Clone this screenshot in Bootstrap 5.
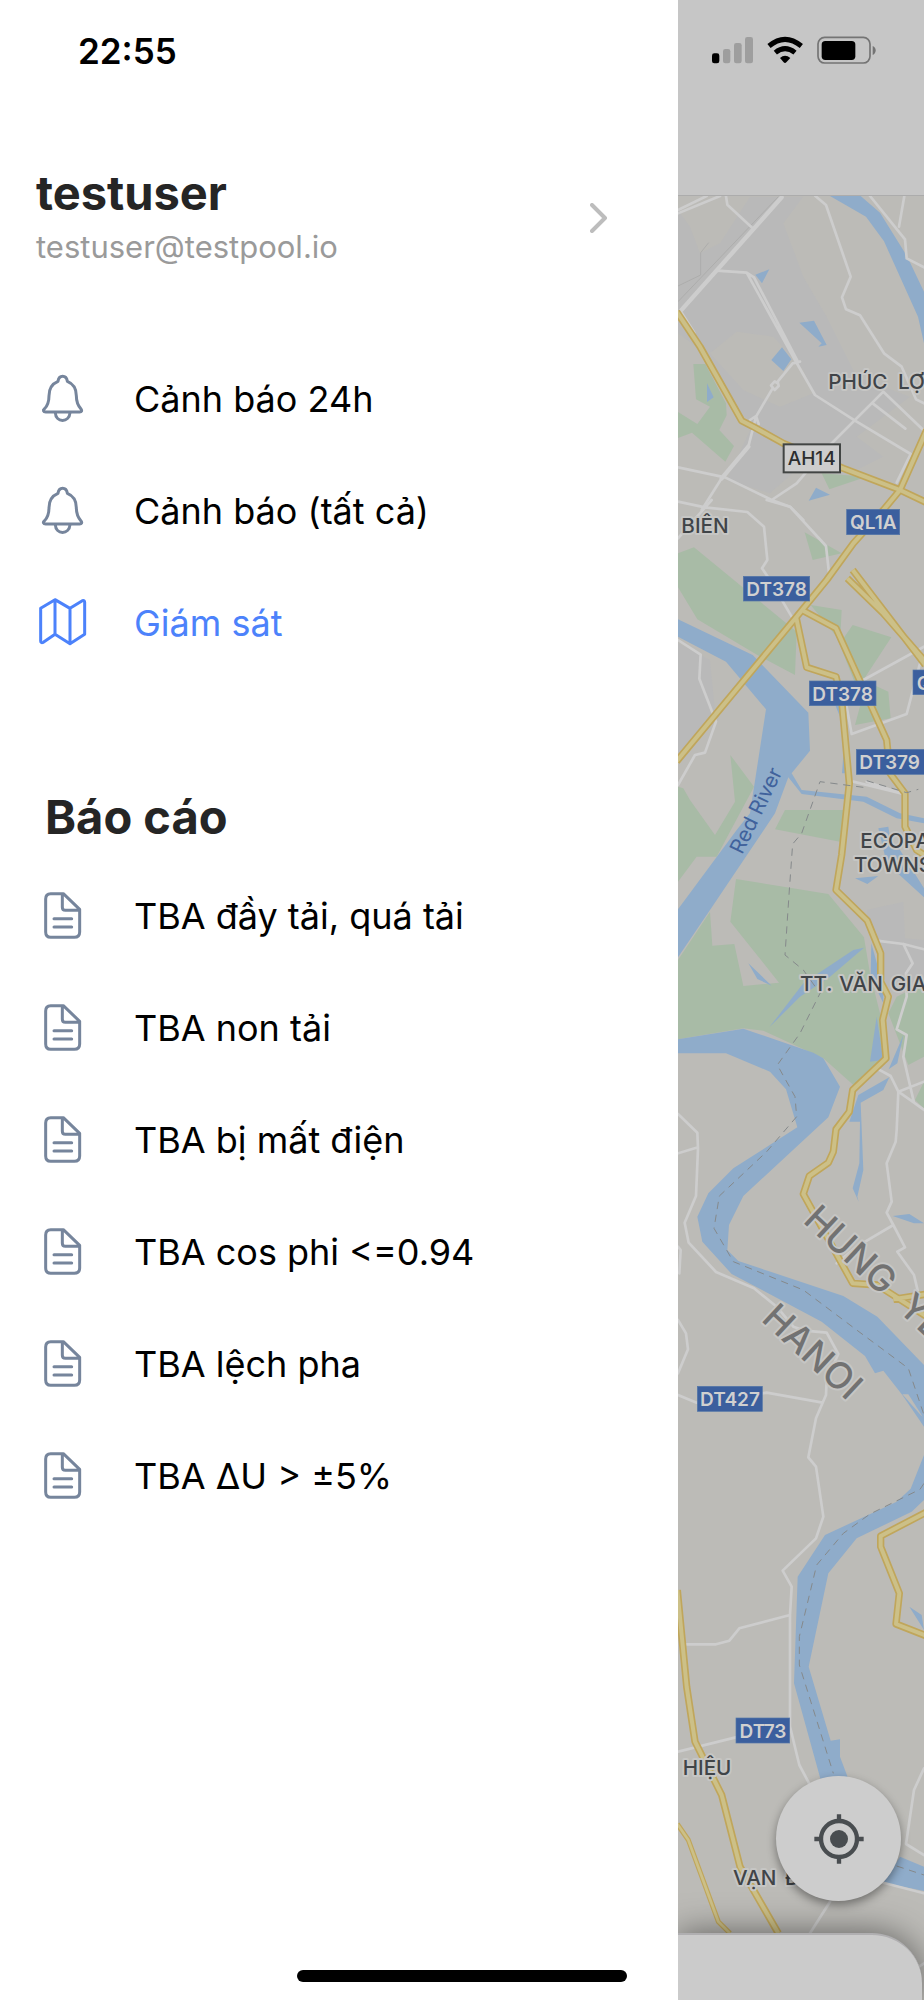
<!DOCTYPE html>
<html lang="vi">
<head>
<meta charset="utf-8">
<meta name="viewport" content="width=device-width, initial-scale=1">
<title>Giám sát</title>
<link href="https://cdn.jsdelivr.net/npm/bootstrap@5.3.0/dist/css/bootstrap.min.css" rel="stylesheet">
<style>
  body { font-family: Inter, "Noto Sans", sans-serif; color: #000; background: #fff; }
  .app-drawer { flex: 0 0 73.4%; }
  .app-clock { font-size: 35px; line-height: 40px; font-weight: 600; padding: 31px 0 0 78px; }
  .app-profile { margin-top: 98px; padding: 0 70px 0 36px; color: #252525; }
  .app-name { font-size: 47px; line-height: 48px; font-weight: 700; }
  .app-mail { font-size: 31px; line-height: 40px; margin-top: 10px; color: #9a9a9a; }
  .app-menu { margin: 0; padding: 0 0 0 38px; }
  .app-menu a { height: 112px; gap: 46px; font-size: 36px; line-height: 48px; color: #000; }
  .app-menu svg { width: 50px; height: 50px; flex: none; color: #76859c; }
  .app-menu a.active, .app-menu a.active svg { color: #4c82fb; }
  .app-first { margin-top: 76px; }
  .app-heading { font-size: 47px; line-height: 56px; font-weight: 700; color: #252525; margin: 110px 0 15px; padding-left: 45px; }
  .app-stroke { fill: none; stroke: currentColor; stroke-width: 9; stroke-linecap: round; stroke-linejoin: round; }
  .app-home { height: 12px; width: 330px; bottom: 18px; background: #000; }
  .map-head { height: 196px; background: #c6c6c6; border-bottom: 1px solid #acacac; padding: 36px 0 0 34px; gap: 14px; }
  .map-view { background: #bcbbb7; min-height: 1804px; }
  .map-svg { inset: 0; width: 100%; height: 100%; }
  .map-locate { width: 125px; height: 125px; right: 23px; bottom: 99px; background: #cdcdcd; color: #494d50; box-shadow: 0 4px 10px rgba(0,0,0,.4); }
  .map-sheet { left: 0; right: 2px; bottom: 0; height: 67px; background: #cbcbcb; border-top: 2px solid #b0afb1; border-top-right-radius: 50px; box-shadow: 0 0 34px rgba(0,0,0,.5); }
  .m-gray { fill: #b9b9b9; } .m-base { fill: #bcbbb7; }
  .m-green { fill: #a8bba6; } .m-water { fill: #8facca; }
  .m-rail { fill: none; stroke: #adadac; stroke-width: 3; }
  .m-road { fill: none; stroke: #cdcdcd; stroke-width: 8; stroke-linejoin: round; stroke-linecap: round; }
  .m-wide { stroke-width: 13; }
  .m-case { fill: none; stroke: #c0a65b; stroke-width: 22; stroke-linejoin: round; }
  .m-fill { fill: none; stroke: #ccc088; stroke-width: 12; stroke-linejoin: round; }
  .m-dash { fill: none; stroke: #85898b; stroke-width: 3; stroke-dasharray: 22 17; }
  .m-shield rect { fill: #3b5f9e; stroke: #5577a8; stroke-width: 2; }
  .m-shield text { fill: #d0d0d0; font-size: 57px; font-weight: 600; text-anchor: middle; }
  .m-label text { fill: #404448; font-size: 62px; font-weight: 500; stroke: #c6c6c4; stroke-width: 12; paint-order: stroke; stroke-linejoin: round; }
  .m-label .m-region { fill: #727272; font-size: 110px; }
</style>
</head>
<body>
<svg class="d-none" aria-hidden="true">
  <symbol id="i-bell" viewBox="114 105 150 150"><g class="app-stroke"><path d="M174 127C177 107 199 107 202 127C222 135 229 148 229 170C229 190 236 202 243 210C247 215 245 219 239 219H137C130 219 128 214 133 210C141 202 147 190 147 170C147 148 155 135 174 127Z"/><path d="M166 221C167 252 208 252 210 221"/></g></symbol>
  <symbol id="i-map" viewBox="114 777 150 150"><g class="app-stroke"><path d="M122 808L165 782L210 808L247 785Q254 783 254 790V886L210 914L165 886L130 910Q122 913 122 906ZM165 782V886M210 808V914"/></g></symbol>
  <symbol id="i-doc" viewBox="114 399 150 150"><g class="app-stroke"><path d="M152 407H190L239 454V522Q239 538 223 538H152Q137 538 137 522V423Q137 407 152 407ZM187 407V448Q187 457 196 457H238M162 482H215M162 507H215"/></g></symbol>
</svg>

<div class="d-flex min-vh-100 position-relative overflow-hidden">
  <aside class="app-drawer d-flex flex-column bg-white">
    <div class="app-clock">22:55</div>
    <a href="#profile" class="app-profile d-flex align-items-center justify-content-between text-decoration-none">
      <div>
        <div class="app-name">testuser</div>
        <div class="app-mail">testuser@testpool.io</div>
      </div>
      <svg width="18" height="30" viewBox="0 0 18 30" fill="none" stroke="#bdbdbd" stroke-width="4" stroke-linecap="round" stroke-linejoin="round" aria-hidden="true"><path d="M2 2L15 15L2 28"/></svg>
    </a>
    <nav>
      <ul class="app-menu app-first list-unstyled">
        <li><a href="#a24" class="d-flex align-items-center text-decoration-none"><svg><use href="#i-bell"/></svg><span>Cảnh báo 24h</span></a></li>
        <li><a href="#all" class="d-flex align-items-center text-decoration-none"><svg><use href="#i-bell"/></svg><span>Cảnh báo (tất cả)</span></a></li>
        <li><a href="#map" class="active d-flex align-items-center text-decoration-none"><svg><use href="#i-map"/></svg><span>Giám sát</span></a></li>
      </ul>
      <h2 class="app-heading">Báo cáo</h2>
      <ul class="app-menu list-unstyled">
        <li><a href="#r1" class="d-flex align-items-center text-decoration-none"><svg><use href="#i-doc"/></svg><span>TBA đầy tải, quá tải</span></a></li>
        <li><a href="#r2" class="d-flex align-items-center text-decoration-none"><svg><use href="#i-doc"/></svg><span>TBA non tải</span></a></li>
        <li><a href="#r3" class="d-flex align-items-center text-decoration-none"><svg><use href="#i-doc"/></svg><span>TBA bị mất điện</span></a></li>
        <li><a href="#r4" class="d-flex align-items-center text-decoration-none"><svg><use href="#i-doc"/></svg><span>TBA cos phi &lt;=0.94</span></a></li>
        <li><a href="#r5" class="d-flex align-items-center text-decoration-none"><svg><use href="#i-doc"/></svg><span>TBA lệch pha</span></a></li>
        <li><a href="#r6" class="d-flex align-items-center text-decoration-none"><svg><use href="#i-doc"/></svg><span>TBA ΔU &gt; ±5%</span></a></li>
      </ul>
    </nav>
  </aside>

  <main class="flex-grow-1 d-flex flex-column overflow-hidden">
    <header class="map-head d-flex align-items-start">
      <svg width="41" height="28" viewBox="126 108 123 84" aria-label="Signal"><rect x="126" y="160" width="22" height="30" rx="7"/><g fill="#9e9e9e"><rect x="159" y="147" width="22" height="43" rx="7"/><rect x="192" y="129" width="23" height="61" rx="7"/><rect x="225" y="111" width="24" height="79" rx="7"/></g></svg>
      <svg width="36" height="28" viewBox="291 108 108 84" aria-label="Wi-Fi"><g fill="none" stroke="#000" stroke-width="15"><path d="M297 138Q345 98 394 138"/><path d="M316 158Q345 134 375 158"/></g><path d="M330 174Q345 161 361 174L349 187Q345 191 341 187Z"/></svg>
      <svg width="60" height="28" viewBox="442 108 180 84" aria-label="Battery"><rect x="445" y="112" width="156" height="77" rx="20" fill="none" stroke="#747474" stroke-width="5"/><rect x="456" y="123" width="101" height="57" rx="11"/><path d="M609 138Q618 142 618 151Q618 161 609 165Z" fill="#747474"/></svg>
    </header>

    <section class="map-view flex-grow-1 position-relative overflow-hidden" aria-label="Map">
      <svg class="map-svg position-absolute" viewBox="24 588 738 5412" preserveAspectRatio="xMinYMin slice">
        <!-- built-up areas -->
        <g transform="translate(0 570)">
          <path class="m-gray" d="M24 60L60 110L90 190L150 160L240 20H400L340 100L400 260L470 380L560 560L720 620L560 740L640 800L520 860L390 830L300 910L170 870L250 700L170 640L120 500L24 430Z"/>
          <path class="m-base" d="M120 490L200 425L310 440L400 540L430 610L330 650L220 600Z"/>
        </g>
        <path class="m-gray" transform="translate(0 1500)" d="M24 430L120 480L138 665L24 760Z"/>
        <path class="m-gray" transform="translate(0 2400)" d="M590 330L700 305L705 415L762 420V540L650 560L600 400Z"/>
        <!-- parks -->
        <g class="m-green">
          <path transform="translate(0 570)" d="M70 522H106L168 640L170 676L148 720L192 768L166 815L66 728L24 744V666L82 702L120 650L78 628ZM455 850L590 860L478 898Z"/>
          <path transform="translate(0 1500)" d="M24 160L72 142L380 395L375 525L262 465L82 358L24 262ZM404 97L515 160L428 180ZM422 315L515 330L510 430L548 375L664 412L580 540L655 575L662 655L555 675L575 600L500 410Z"/>
          <path transform="translate(0 2400)" d="M24 -40L40 -35L60 0L135 105L195 5L181 -135L252 -40L140 170H80L24 245ZM345 30H520L510 125L315 88ZM198 237L475 282L582 412L600 520L645 700L650 775L550 855L460 775L280 692L220 685L24 718V480L120 335L127 437L193 432L220 558L327 548L181 365ZM762 550L680 590L655 640L715 795L762 770ZM762 845L735 900L762 925Z"/>
        </g>
        <!-- rivers and lakes -->
        <g class="m-water">
          <path transform="translate(0 570)" d="M480 18H572L630 68L712 200L762 305V460L744 380L642 154L588 80ZM256 254L298 238L276 280ZM388 398L432 392L470 465L445 470L455 460ZM336 472L364 508L340 543L304 510ZM111 580L131 622L111 636ZM438 893L480 914L416 932Z"/>
          <path transform="translate(0 1500)" d="M24 358L248 465L415 638L420 752L355 832L315 940L120 1230L24 1372V1228L200 990L240 940L288 628L168 485L24 410ZM365 820L395 870L590 890L690 940L762 955V970L680 955L580 905L395 882L355 832ZM497 618H516V665ZM516 820L522 740L530 820Z"/>
          <path transform="translate(0 2400)" d="M235 490L305 557L262 537ZM298 682L400 550L550 450L582 443L480 530L390 590ZM604 430L640 560V610L602 530ZM620 650L640 780L600 785ZM700 705L682 790L656 808ZM658 832L640 870L572 908L580 1110L562 1190L566 1205L548 1165L568 1090L570 965H538L565 885ZM555 235L625 228L592 252ZM625 85L655 80L662 125L690 150L762 265V292L650 190Z"/>
          <path transform="translate(0 3300)" d="M24 -182L220 -214L430 -142L460 -125L510 -40L475 52L220 288L177 375L172 450L205 483L520 588L622 650L762 795V980L697 885L640 812L615 820L585 768L455 665L185 522L97 425L82 350L115 280L190 205L382 82L348 -32L300 -85L168 -140H24ZM668 348L718 342L762 370H732Z"/>
          <path transform="translate(0 4200)" d="M762 165L722 266L680 305L465 405L383 530L372 850L455 1150H540L510 1070V1018L482 1022L416 800L475 520L560 415L725 335L762 300ZM718 620L755 645L762 690ZM640 1448L690 1370L762 1400V1473Z"/>
        </g>
        <path class="m-base" transform="translate(0 3300)" d="M697 883H715L758 950L752 945Z"/>
        <path class="m-rail" transform="translate(0 570)" d="M24 335L325 20M24 288L92 255V188L116 158"/>
        <!-- minor roads -->
        <g class="m-road">
          <path transform="translate(0 570)" d="M24 60L110 18M24 70L150 18M168 18L172 44L248 115M140 242L230 248L375 510L435 615L555 692L722 792L680 878M230 248L252 262L382 512M436 18L468 45L542 260L516 322L528 358L570 376L642 490L695 530L738 628L762 640M600 18L705 148L710 205L762 232M703 18L687 110M390 515L368 520L323 575L326 588L314 600L303 586L314 574L323 580M306 598L258 680L235 770L155 865L95 960M240 690L258 678L266 702M24 832L165 862L305 930L360 950L400 990M480 765L640 605L762 722M608 640L706 716M305 930L380 880L410 845"/>
          <path class="m-wide" transform="translate(0 570)" d="M335 22L30 365L70 428M235 770L155 865"/>
          <path transform="translate(0 1500)" d="M24 5L105 22L232 36L282 80L292 180L276 205L300 240L365 350M125 0L24 115M290 0L360 20L468 138L478 228M24 420L92 464L88 536L138 665L105 758L75 765L24 855M580 540L762 440M750 490L710 642L545 702L530 620M550 845L700 882L590 845"/>
          <path transform="translate(0 2400)" d="M620 422L700 432L762 448M700 432L728 490L708 520L710 590L680 688L710 705L700 770L732 908M620 805L662 828L685 875L732 908L762 930M762 845L685 875L680 990L677 1025L650 1090L665 1205L650 1238L670 1275L705 1342L682 1355L732 1425L745 1480M670 1275L560 1340L500 1390"/>
          <path transform="translate(0 3300)" d="M24 42L82 98L84 145L78 288L44 368L56 428L138 516L252 565L320 620L370 680L405 692L470 698L505 762L470 840L468 885L458 908M24 160L84 142M24 440L32 450L28 520M24 660L48 700L54 748L24 820M24 885L80 908L290 878L458 908L438 955L415 1072L438 1100L460 1250L438 1315L338 1412L365 1460L360 1545V1880L388 1995L420 2055M50 1633H138L178 1622L208 1585L360 1545"/>
          <path transform="translate(0 5100)" d="M24 155L197 112M762 205L732 270L708 432L762 465M640 548L762 580M480 605L420 700M750 798L762 790"/>
        </g>
        <!-- main roads: casing, then fill -->
        <defs><g id="majors">
          <path d="M20 935L90 1040L215 1262L250 1280L340 1330L520 1405L690 1470L770 1508M770 1290L690 1470L640 1530L550 1630L470 1740L380 1850L20 2284"/>
          <path d="M548 1710L766 1995M532 1735L640 1840L766 1985M400 1832L498 1885L650 2220L660 2320L705 2380V2480L740 2550L770 2570"/>
          <path d="M378 1850L410 2002L498 2030L515 2100L538 2350L515 2565L498 2670L592 2762L632 2860V2945L655 2990L638 3060L648 3175L548 3270L538 3335L498 3388L490 3455L475 3488L418 3528L400 3582L548 3850L622 3855L770 3950M670 3898L770 3882"/>
          <path d="M770 4536L632 4608V4640L688 4780L678 4872L770 4908M22 4770L50 5060L75 5225L155 5385L210 5600L325 5800"/>
        </g></defs>
        <use href="#majors" class="m-case"/><use href="#majors" class="m-fill"/>
        <path class="m-case" style="stroke-width:15" d="M22 5472L55 5520L145 5765L180 5800"/><path class="m-fill" style="stroke-width:8" d="M22 5472L55 5520L145 5765L180 5800"/>
        <g class="m-dash">
          <path transform="translate(0 2400)" d="M590 -58L710 -22L745 -32M580 -38L450 -55L395 100L368 132L358 270L345 465L400 510L450 580L390 700L322 795L375 890L380 950L290 1055L148 1188L132 1285L190 1385L400 1470L560 1590L715 1705L762 1845"/>
          <path transform="translate(0 4200)" d="M762 250L750 268L600 342L520 400L440 495L388 710V795L490 1120M680 1398L762 1425"/>
        </g>
        <g class="m-label">
          <text x="475" y="1166">PHÚC <tspan x="684">LỢI</tspan></text>
          <text x="34" y="1599">BIÊN</text>
          <text x="571" y="2544">ECOPARK</text>
          <text x="552" y="2615">TOWNSHIP</text>
          <text x="390" y="2973">TT. <tspan x="508">VĂN</tspan> <tspan x="662">GIANG</tspan></text>
          <text x="38" y="5325">HIỆU</text>
          <text x="189" y="5656">VẠN <tspan x="345">ĐIỂM</tspan></text>
          <text class="m-region" transform="translate(396 3665) rotate(43)">HUNG&#160; YÊN</text>
          <text class="m-region" transform="translate(271 3961) rotate(43)">HANOI</text>
        </g>
        <text transform="translate(216 2566) rotate(-64)" fill="#40629c" font-size="62">Red River</text>
        <g class="m-shield">
          <rect x="341" y="1333" width="169" height="84" style="fill:#cdcdcd;stroke:#424544;stroke-width:6"/><text x="425" y="1395" style="fill:#2c2e2f;font-weight:500">AH14</text>
          <rect x="530" y="1528" width="159" height="76"/><text x="610" y="1588">QL1A</text>
          <rect x="220" y="1729" width="199" height="74"/><text x="320" y="1788">DT378</text>
          <rect x="418" y="2043" width="200" height="74"/><text x="518" y="2102">DT378</text>
          <rect x="729" y="2010" width="160" height="74"/><text x="810" y="2069">QL1A</text>
          <rect x="559" y="2248" width="206" height="75"/><text x="659" y="2307">DT379</text>
          <rect x="82" y="4159" width="195" height="75"/><text x="180" y="4218">DT427</text>
          <rect x="198" y="5154" width="161" height="75"/><text x="279" y="5214">DT73</text>
        </g>
      </svg>
      <div class="map-sheet position-absolute"></div>
      <button type="button" class="map-locate position-absolute btn rounded-circle border-0 p-0 d-flex align-items-center justify-content-center" aria-label="Vị trí của tôi">
        <svg width="50" height="50" viewBox="0 0 150 150" fill="none" stroke="currentColor" aria-hidden="true"><circle cx="75" cy="75" r="27" fill="currentColor" stroke="none"/><circle cx="75" cy="75" r="54" stroke-width="13"/><path stroke-width="13" d="M75 1V23M75 127V149M1 75H23M127 75H149"/></svg>
      </button>
    </section>
  </main>
  <div class="app-home position-absolute start-50 translate-middle-x rounded-pill"></div>
</div>
<script src="https://cdn.jsdelivr.net/npm/bootstrap@5.3.0/dist/js/bootstrap.bundle.min.js"></script>
</body>
</html>
